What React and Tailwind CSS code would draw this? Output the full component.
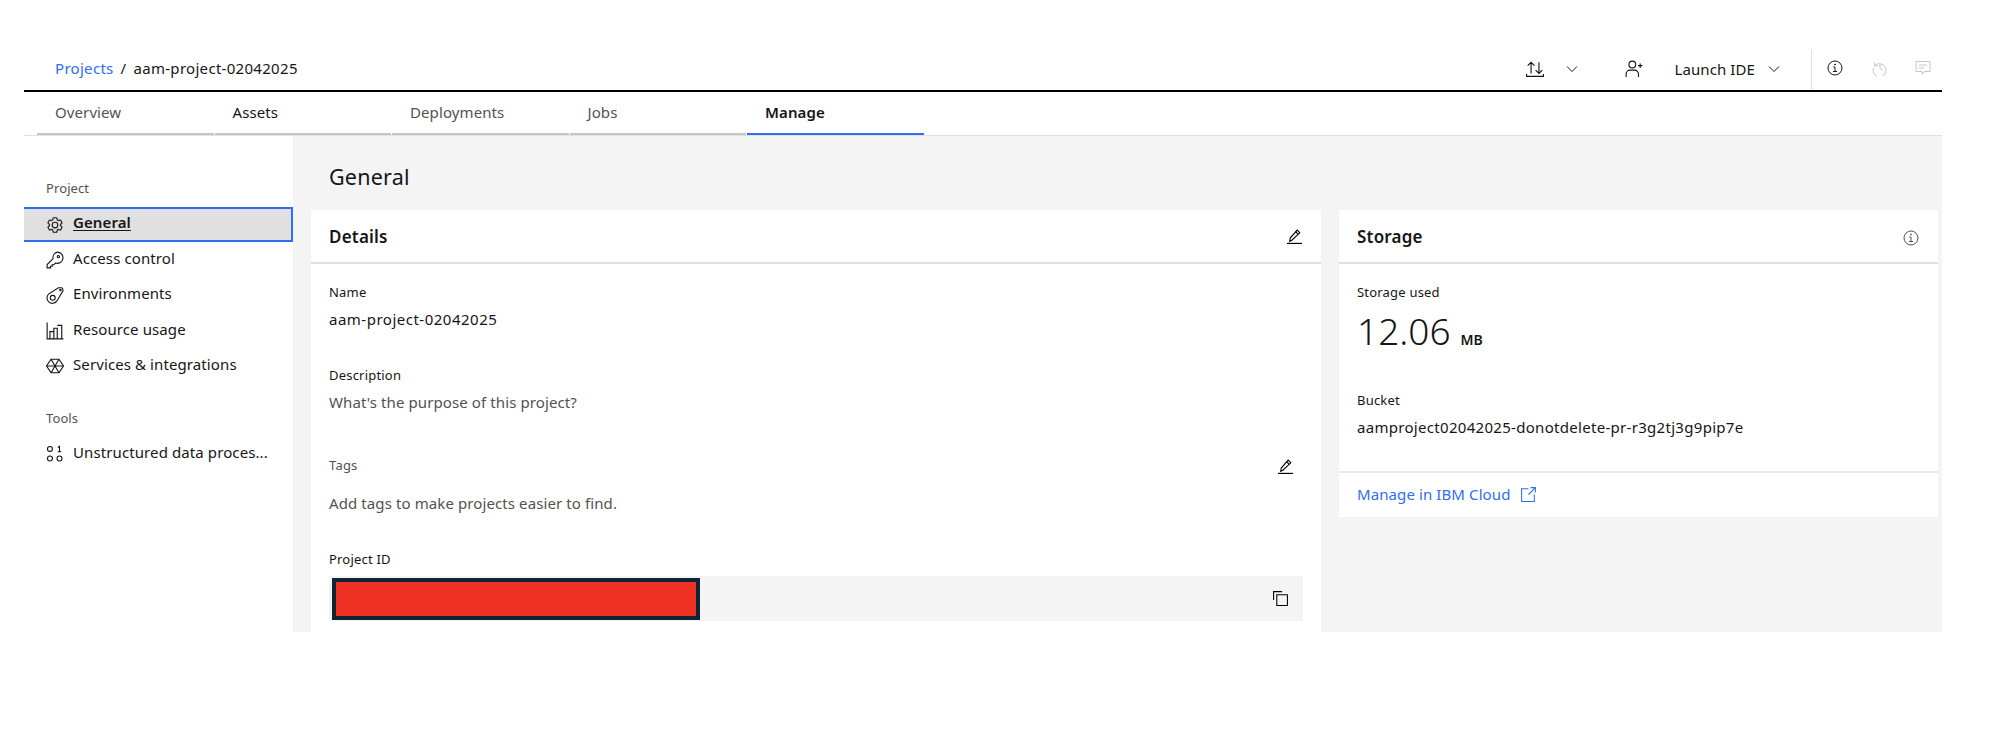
const Icon = ({ children, size = 16, className = '' }) => (
  <svg width={size} height={size} viewBox="0 0 16 16" fill="none" stroke="currentColor" strokeWidth="1" className={`shrink-0 ${className}`}>
    {children}
  </svg>
)

const Chevron = () => (
  <Icon><path d="M3 5.500l5 5 5-5" /></Icon>
)

const Gear = () => (
  <svg width="18" height="18" viewBox="0 0 32 32" fill="currentColor" className="shrink-0">
    <path d="M27,16.76c0-.25,0-.5,0-.76s0-.51,0-.77l1.92-1.68A2,2,0,0,0,29.3,11L26.94,7a2,2,0,0,0-1.73-1,2,2,0,0,0-.64.1l-2.43.82a11.35,11.35,0,0,0-1.31-.75l-.51-2.52a2,2,0,0,0-2-1.61H13.64a2,2,0,0,0-2,1.61l-.51,2.52a11.48,11.48,0,0,0-1.32.75L7.43,6.06A2,2,0,0,0,6.79,6,2,2,0,0,0,5.06,7L2.7,11a2,2,0,0,0,.41,2.51L5,15.24c0,.25,0,.5,0,.76s0,.51,0,.77L3.11,18.45A2,2,0,0,0,2.7,21L5.06,25a2,2,0,0,0,1.73,1,2,2,0,0,0,.64-.1l2.43-.82a11.35,11.35,0,0,0,1.31.75l.51,2.52a2,2,0,0,0,2,1.61h4.72a2,2,0,0,0,2-1.61l.51-2.52a11.48,11.48,0,0,0,1.32-.75l2.42.82a2,2,0,0,0,.64.1,2,2,0,0,0,1.73-1L29.3,21a2,2,0,0,0-.41-2.51ZM25.21,24l-3.43-1.16a8.86,8.86,0,0,1-2.71,1.57L18.36,28H13.64l-.71-3.55a9.36,9.36,0,0,1-2.7-1.57L6.79,24,4.43,20l2.72-2.4a8.9,8.9,0,0,1,0-3.13L4.43,12,6.79,8l3.43,1.16a8.86,8.86,0,0,1,2.71-1.57L13.64,4h4.72l.71,3.55a9.36,9.36,0,0,1,2.7,1.57L25.21,8,27.57,12l-2.72,2.4a8.9,8.9,0,0,1,0,3.13L27.57,20Z" />
    <path d="M16,22a6,6,0,1,1,6-6A5.94,5.94,0,0,1,16,22Zm0-10a3.91,3.91,0,0,0-4,4,3.91,3.91,0,0,0,4,4,3.91,3.91,0,0,0,4-4A3.91,3.91,0,0,0,16,12Z" />
  </svg>
)

const KeyIcon = () => (
  <Icon size={18}>
    <path d="M10 1a5 5 0 1 1-1.600 9.700L7 12.200H5.500v1.300H4v1.500H1v-3l5.300-5.300A5 5 0 0 1 10 1z" />
    <circle cx="11" cy="5" r="1" />
  </Icon>
)

const EnvIcon = () => (
  <Icon size={18}>
    <path d="M2.500 7L11 1.500h2.500a1.500 1.500 0 0 1 1.500 1.500v1.500L9.500 13.500A4.800 4.800 0 1 1 2.500 7z" />
    <circle cx="6" cy="10.500" r="2.200" />
    <circle cx="12.800" cy="3.500" r="0.600" />
  </Icon>
)

const ChartIcon = () => (
  <Icon size={18}>
    <path d="M1 .5v14.500H15.500" />
    <path d="M3.500 15V8.500h3.500V15M7 15V5.500h3V15M10 3h4v12" />
  </Icon>
)

const ServicesIcon = () => (
  <Icon size={18}>
    <path d="M4.500 2h7L15.500 8l-4 6h-7L.5 8z" />
    <path d="M.5 8h15M4.500 2L11.500 14M11.500 2L4.500 14" />
  </Icon>
)

const NodesIcon = () => (
  <Icon size={18}>
    <circle cx="3.500" cy="3.500" r="2.200" />
    <circle cx="3.500" cy="12" r="2.200" />
    <circle cx="12" cy="12" r="2.200" />
    <path d="M10.500 2.200L12 1.200V6M10.500 6h3" />
  </Icon>
)

const PencilIcon = () => (
  <Icon size={17}>
    <path d="M1 14.500h14" strokeWidth="1.100" />
    <path d="M3.500 12.500l.5-3L10.500 2l2.500 2.500L5.500 11.500z" />
    <path d="M9 3.500l2.500 2.500" />
  </Icon>
)

const InfoIcon = ({ size = 16 }) => (
  <Icon size={size}>
    <circle cx="8" cy="8" r="7" />
    <path d="M8 7v4.500M6.300 7H8M6 11.500h4" />
    <circle cx="8" cy="4.600" r="0.500" fill="currentColor" />
  </Icon>
)

const sideItems = [
  { label: 'Access control', icon: <KeyIcon /> },
  { label: 'Environments', icon: <EnvIcon /> },
  { label: 'Resource usage', icon: <ChartIcon /> },
  { label: 'Services & integrations', icon: <ServicesIcon /> },
]

const tabs = ['Overview', 'Assets', 'Deployments', 'Jobs']
const tabColors = ['text-[#525252]', 'text-[#161616]', 'text-[#525252]', 'text-[#525252]']

const Sidebar = () => (
  <aside className="w-[269px] shrink-0 pt-[43px] text-[15px] tracking-[0.1px] text-[#161616]">
    <p className="mb-[10px] h-[18px] pl-[22px] text-[13px] leading-[18px] text-[#525252]">Project</p>
    <div className="flex h-[35px] items-center gap-[9px] border-2 border-l-0 border-[#2f6ef3] bg-[#e0e0e0] pl-[22px]">
      <Gear />
      <span className="-translate-y-[2px] font-semibold underline underline-offset-2">General</span>
    </div>
    {sideItems.map((item) => (
      <div key={item.label} className="flex h-[35.5px] items-center gap-[9px] pl-[22px]">
        {item.icon}
        <span className="-translate-y-[2px]">{item.label}</span>
      </div>
    ))}
    <p className="mt-[25px] h-[18px] pl-[22px] text-[13px] leading-[18px] text-[#525252]">Tools</p>
    <div className="mt-[9px] flex h-[35px] items-center gap-[9px] pl-[22px]">
      <NodesIcon />
      <span className="-translate-y-px">Unstructured data proces...</span>
    </div>
  </aside>
)

const Field = ({ label, value, muted, className = '' }) => (
  <div className={className}>
    <p className="text-[13px] leading-[18px] tracking-[0.2px] text-[#161616]">{label}</p>
    <p className={`mt-[9px] text-[15px] leading-[18px] ${muted ? 'tracking-[0.1px] text-[#525252]' : 'tracking-[0.5px] text-[#161616]'}`}>{value}</p>
  </div>
)

const DetailsCard = () => (
  <section className="h-[422px] w-[1010px] shrink-0 bg-white">
    <div className="flex h-[54px] items-center justify-between border-b-2 border-[#e0e0e0] pl-[18px] pr-[18px]">
      <h2 className="mt-[2px] text-[17px] font-semibold tracking-[0.2px] text-[#161616]">Details</h2>
      <PencilIcon />
    </div>
    <div className="px-[18px] pt-[19px]">
      <Field label="Name" value="aam-project-02042025" />
      <Field label="Description" value="What's the purpose of this project?" muted className="mt-[38px]" />
      <div className="mt-[46px] flex h-[18px] items-center justify-between pr-[9px]">
        <p className="text-[13px] tracking-[0.2px] text-[#525252]">Tags</p>
        <PencilIcon />
      </div>
      <p className="mt-[19px] text-[15px] leading-[18px] tracking-[0.1px] text-[#525252]">Add tags to make projects easier to find.</p>
      <p className="mt-[38px] text-[13px] leading-[18px] tracking-[0.2px] text-[#161616]">Project ID</p>
      <div className="mt-[8px] flex h-[45px] w-[974px] items-center justify-between bg-[#f4f4f4] pl-[3px] pr-[14px]">
        <div className="h-[42px] w-[368px] border-4 border-[#0f2536] bg-[#ef3124]" />
        <Icon size={17}>
          <path d="M1.500 9.500V1.500H9.500" />
          <path d="M4.500 4.500h10v10h-10z" />
        </Icon>
      </div>
    </div>
  </section>
)

const StorageCard = () => (
  <section className="ml-[18px] h-[307px] w-[599px] shrink-0 bg-white">
    <div className="flex h-[54px] items-center justify-between border-b-2 border-[#e0e0e0] pl-[18px] pr-[19px]">
      <h2 className="mt-[2px] text-[17px] font-semibold tracking-[0.2px] text-[#161616]">Storage</h2>
      <span className="mt-[3px] text-[#525252]"><InfoIcon /></span>
    </div>
    <div className="h-[209px] border-b-2 border-[#e8e8e8] px-[18px] pt-[19px]">
      <p className="text-[13px] leading-[18px] tracking-[0.2px] text-[#161616]">Storage used</p>
      <p className="mt-[8px] flex items-baseline gap-[10px] leading-[44px] text-[#161616]">
        <span className="text-[37px] font-light">12.06</span>
        <span className="text-[14px] font-semibold">MB</span>
      </p>
      <p className="mt-[29px] text-[13px] leading-[18px] tracking-[0.2px] text-[#161616]">Bucket</p>
      <p className="mt-[9px] text-[15px] leading-[18px] tracking-[0.3px] text-[#161616]">aamproject02042025-donotdelete-pr-r3g2tj3g9pip7e</p>
    </div>
    <div className="flex h-[42px] items-center gap-[9px] px-[18px] text-[15px] tracking-[0.1px] text-[#2f6ef3]">
      <span>Manage in IBM Cloud</span>
      <Icon size={17}>
        <path d="M8 2.500H1.500v12h12V8" />
        <path d="M10 1.500h4.500V6M14.500 1.500L8 8" />
      </Icon>
    </div>
  </section>
)

export default function App() {
  return (
    <div className="h-[752px] w-[2006px] overflow-hidden bg-white pl-[24px] pt-[40px] font-['Noto_Sans',sans-serif]">
      <div className="w-[1918px]">
        <header className="flex h-[52px] items-center justify-between border-b-2 border-black pl-[31px] text-[15px] tracking-[0.3px] text-[#161616]">
          <div className="mt-[6px] flex items-center gap-[7px]">
            <span className="text-[#2f6ef3]">Projects</span>
            <span>/</span>
            <span>aam-project-02042025</span>
          </div>
          <div className="flex h-full items-center text-[#161616]">
            <div className="mt-[8px] flex items-center">
              <Icon size={18} className="mr-[20px]">
                <path d="M.5 12.500v2h15v-2M4.500 12V2M1.500 5l3-3 3 3M11.500 2v10M8.500 9l3 3 3-3" />
              </Icon>
              <Chevron />
              <span className="ml-[45px] mr-[31px]">
                <Icon size={18}>
                  <circle cx="6.500" cy="4" r="3" />
                  <path d="M1 15v-2.500a3.500 3.500 0 0 1 3.500-3.500h4A3.500 3.500 0 0 1 12 12.500V15M11.500 5h4M13.500 3v4" />
                </Icon>
              </span>
              <span className="tracking-[0.1px]">Launch IDE</span>
              <span className="ml-[11px] mr-[29px]"><Chevron /></span>
            </div>
            <div className="mb-[1px] h-[40px] w-px self-end bg-[#e0e0e0]" />
            <div className="mt-[5px] flex items-center">
              <span className="ml-[15px]"><InfoIcon /></span>
              <span className="ml-[29px] text-[#c6c6c6]">
                <Icon>
                  <path d="M2.500 2.500V6h3.500M2.700 6A6.500 6.500 0 1 1 1.500 8" />
                  <path d="M8 4v4.500l3 2" />
                </Icon>
              </span>
              <span className="ml-[27px] mr-[11px] text-[#c6c6c6]">
                <Icon>
                  <path d="M1 1.500h14v10H9.500L7 14.500v-3H1z" />
                  <path d="M4 5h8M4 8h5" />
                </Icon>
              </span>
            </div>
          </div>
        </header>

        <nav className="flex h-[44px] border-b border-[#e0e0e0] pl-[13px] text-[15px] tracking-[0.1px]">
          {tabs.map((tab, i) => (
            <div key={tab} className={`mr-px flex h-[43px] w-[176.5px] items-center border-b-2 border-[#c6c6c6] pl-[18px] ${tabColors[i]}`}>
              {tab}
            </div>
          ))}
          <div className="flex h-[43px] w-[177px] items-center border-b-2 border-[#2f6ef3] pl-[18px] font-semibold text-[#161616]">
            Manage
          </div>
        </nav>

        <div className="flex h-[496px]">
          <Sidebar />
          <main className="flex-1 bg-[#f4f4f4] pl-[18px]">
            <h1 className="ml-[18px] pt-[29px] text-[21.5px] leading-[24px] tracking-[0.2px] text-[#161616]">General</h1>
            <div className="mt-[21px] flex">
              <DetailsCard />
              <StorageCard />
            </div>
          </main>
        </div>
      </div>
    </div>
  )
}
